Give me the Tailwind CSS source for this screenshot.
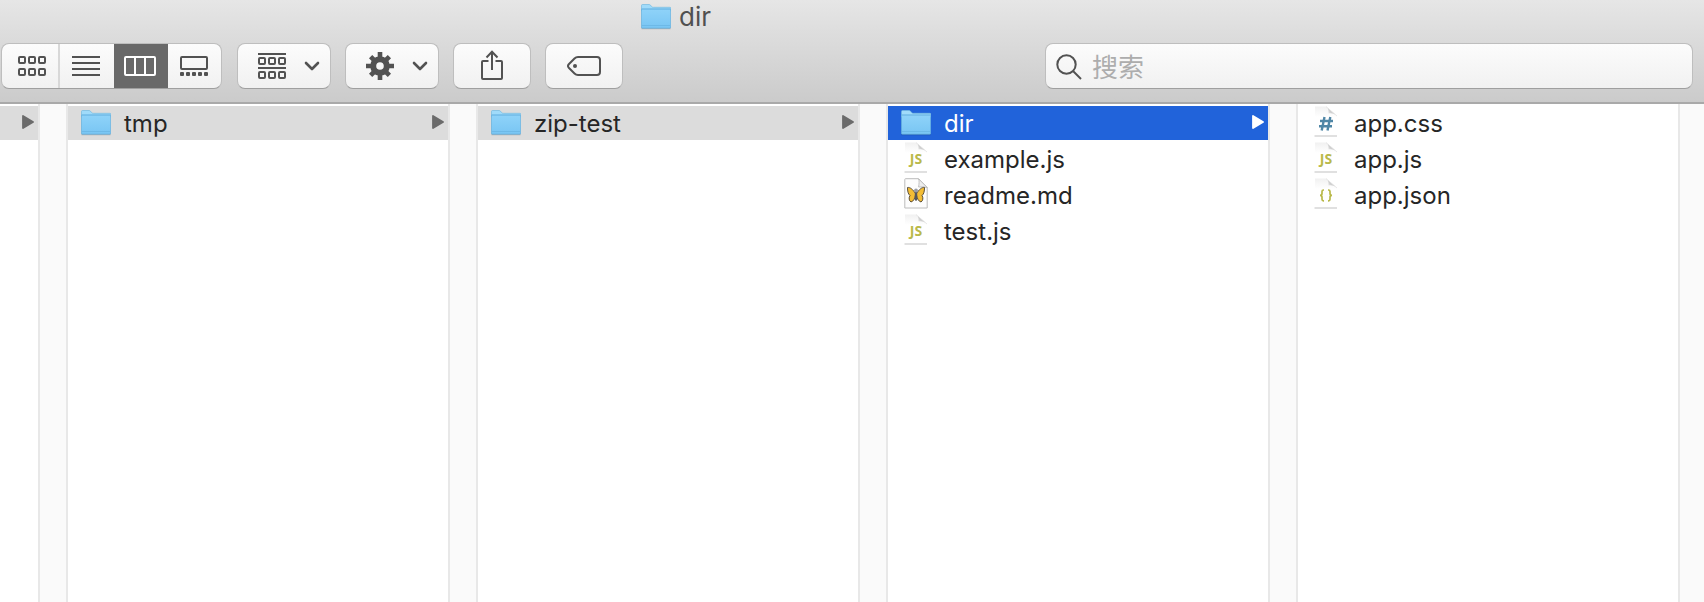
<!DOCTYPE html>
<html lang="zh-CN">
<head>
<meta charset="utf-8">
<meta name="viewport" content="width=device-width, initial-scale=1">
<title>dir</title>
<script src="https://cdn.jsdelivr.net/npm/@tailwindcss/browser@4"></script>
</head>
<body class="flex min-h-screen flex-col bg-white font-[Inter,'Noto_Sans_CJK_SC',sans-serif] text-2xl text-[#262626]">
<svg class="absolute h-0 w-0" aria-hidden="true">
  <defs>
    <linearGradient id="folderFill" x1="0" y1="0" x2="0" y2="1"><stop offset="0" stop-color="#8fd3f9"/><stop offset="1" stop-color="#78c5f3"/></linearGradient>
    <linearGradient id="fold" x1="0" y1="1" x2="1" y2="0"><stop offset="0.1" stop-color="#f2f2f2"/><stop offset="0.5" stop-color="#c8c8c8"/><stop offset="0.6" stop-color="#f4f4f4"/></linearGradient>
    <linearGradient id="paper" x1="0" y1="0" x2="0" y2="1"><stop offset="0" stop-color="#f1f1f1"/><stop offset="0.35" stop-color="#fff"/></linearGradient>
  </defs>
  <symbol id="folder" viewBox="0 0 30 26">
    <path d="M.5 24.5h29" stroke="#000" stroke-opacity=".2" stroke-width="1.5"/>
    <path d="M.5 1.5Q.5.5 1.500.5H8q1 0 1.600.8l1 1.200q.6.8 1.500.8H29q.8 0 .8.800V7H.5z" fill="#a0dbfa" stroke="#74b9e0" stroke-width=".7"/>
    <path d="M.4 5h29.300v18.400q0 .8-.8.800H1.200q-.8 0-.8-.8z" fill="url(#folderFill)" stroke="#62aedb" stroke-width=".7"/>
    <path d="M1 5h28" stroke="#73bce8" stroke-width="1"/>
    <path d="M1 21.500h28" stroke="#69b5e3" stroke-width=".8"/>
  </symbol>
  <symbol id="page" viewBox="0 0 24 31">
    <path d="M1 .5H12L23 10V30H1z" fill="url(#paper)"/>
    <path d="M12 .5C15 2 14.500 6 14.500 7.500C18 7 21 8 23 10z" fill="url(#fold)"/>
    <path d="M12 .5L23 10" stroke="#e2e2e2" stroke-width=".8"/>
    <path d="M.5 30H23" stroke="#cbcbcb" stroke-width="1.200"/>
  </symbol>
  <symbol id="arrow" viewBox="0 0 12 14"><path d="M1 1L11 7L1 13z" fill="currentColor" stroke="currentColor" stroke-width="1.800" stroke-linejoin="round"/></symbol>
  <symbol id="chevron" viewBox="0 0 16 10"><path d="M2 2L8 8L14 2" fill="none" stroke="currentColor" stroke-width="2.600" stroke-linecap="round" stroke-linejoin="round"/></symbol>
</svg>

<header class="border-b-2 border-[#a9a9a9] bg-linear-to-b from-[#e6e6e6] to-[#cbcbcb] pb-[13px] text-[#525252]">
  <div class="flex h-8 items-center pl-[641px] pt-0.5">
    <svg class="h-[26px] w-[30px]" aria-hidden="true"><use href="#folder"/></svg>
    <h1 class="ml-2 text-[26px] leading-8 text-[#505050]">dir</h1>
  </div>
  <div class="mt-[11px] flex h-[46px] items-stretch pl-px pr-[11px]">
    <div class="flex overflow-hidden rounded-lg border border-[#bebebe] border-b-[#9f9f9f] bg-linear-to-b from-[#fcfcfc] to-[#f1f1f1]" role="group" aria-label="显示方式">
      <button type="button" aria-label="图标" class="flex w-[58px] items-center justify-center border-r-2 border-[#d8d8d8] pl-1">
        <svg class="h-5 w-7" viewBox="0 0 28 20" fill="none" stroke="currentColor" stroke-width="2"><rect x="1" y="1" width="6" height="6" rx="1"/><rect x="11" y="1" width="6" height="6" rx="1"/><rect x="21" y="1" width="6" height="6" rx="1"/><rect x="1" y="13" width="6" height="6" rx="1"/><rect x="11" y="13" width="6" height="6" rx="1"/><rect x="21" y="13" width="6" height="6" rx="1"/></svg>
      </button>
      <button type="button" aria-label="列表" class="flex w-[54px] items-center justify-center pr-0.5">
        <svg class="h-5 w-7" viewBox="0 0 28 20" stroke="currentColor" stroke-width="2"><path d="M0 1H28M0 7H28M0 13H28M0 19H28"/></svg>
      </button>
      <button type="button" aria-label="分栏" aria-pressed="true" class="-my-px flex w-[54px] items-center justify-center bg-[#696969] pr-0.5 text-white">
        <svg class="h-5 w-8" viewBox="0 0 32 20" fill="none" stroke="currentColor" stroke-width="2"><rect x="1" y="1" width="30" height="18" rx="1"/><path d="M11 1V19M21 1V19"/></svg>
      </button>
      <button type="button" aria-label="画廊" class="flex w-[53px] items-center justify-center pr-px">
        <svg class="h-5 w-7" viewBox="0 0 28 20" fill="none" stroke="currentColor" stroke-width="2"><rect x="1" y="1" width="26" height="12" rx="1"/><g fill="currentColor" stroke="none"><rect y="16" width="4" height="4" rx="1"/><rect x="6" y="16" width="4" height="4" rx="1"/><rect x="12" y="16" width="4" height="4" rx="1"/><rect x="18" y="16" width="4" height="4" rx="1"/><rect x="24" y="16" width="4" height="4" rx="1"/></g></svg>
      </button>
    </div>
    <button type="button" aria-label="分组" class="ml-[15px] flex w-[94px] items-center justify-between rounded-lg border border-[#bebebe] border-b-[#9f9f9f] bg-linear-to-b from-[#fcfcfc] to-[#f1f1f1] pl-5 pr-2.5">
      <svg class="h-[26px] w-7" viewBox="0 0 28 26" fill="none" stroke="currentColor" stroke-width="2"><path d="M0 1H28M0 15H28"/><rect x="1" y="5" width="6" height="6" rx="1"/><rect x="11" y="5" width="6" height="6" rx="1"/><rect x="21" y="5" width="6" height="6" rx="1"/><rect x="1" y="19" width="6" height="6" rx="1"/><rect x="11" y="19" width="6" height="6" rx="1"/><rect x="21" y="19" width="6" height="6" rx="1"/></svg>
      <svg class="h-2.5 w-4"><use href="#chevron"/></svg>
    </button>
    <button type="button" aria-label="操作" class="ml-3.5 flex w-[94px] items-center justify-between rounded-lg border border-[#bebebe] border-b-[#9f9f9f] bg-linear-to-b from-[#fcfcfc] to-[#f1f1f1] pl-5 pr-2.5">
      <svg class="h-7 w-7" viewBox="-14 -14 28 28"><circle r="6.800" fill="none" stroke="currentColor" stroke-width="6"/><g stroke="currentColor" stroke-width="4.600"><path d="M0 -14V-8M0 14V8M-14 0H-8M14 0H8"/><path d="M-9.400 -9.400L-6 -6M9.400 9.400L6 6M-9.400 9.400L-6 6M9.400 -9.400L6 -6"/></g></svg>
      <svg class="h-2.5 w-4"><use href="#chevron"/></svg>
    </button>
    <button type="button" aria-label="共享" class="ml-3.5 flex w-[78px] items-center justify-center rounded-lg border border-[#bebebe] border-b-[#9f9f9f] bg-linear-to-b from-[#fcfcfc] to-[#f1f1f1]">
      <svg class="mb-0.5 h-[30px] w-[22px]" viewBox="0 0 22 30" fill="none" stroke="currentColor" stroke-width="2"><path d="M7.500 11H2Q1 11 1 12V28Q1 29 2 29H20Q21 29 21 28V12Q21 11 20 11H14.500M11 20V2M5.500 7.500L11 1.800L16.500 7.500"/></svg>
    </button>
    <button type="button" aria-label="标签" class="ml-3.5 flex w-[78px] items-center justify-center rounded-lg border border-[#bebebe] border-b-[#9f9f9f] bg-linear-to-b from-[#fcfcfc] to-[#f1f1f1]">
      <svg class="h-5 w-[34px]" viewBox="0 0 34 20" fill="none" stroke="currentColor" stroke-width="2"><path d="M11 1H30Q33 1 33 4V16Q33 19 30 19H11Q9 19 7.500 17.500L2 12Q0 10 2 8L7.500 2.500Q9 1 11 1Z"/><circle cx="8" cy="10" r="2" fill="currentColor" stroke="none"/></svg>
    </button>
    <label class="ml-auto flex w-[38.3%] items-center rounded-lg border border-[#bebebe] border-b-[#9f9f9f] bg-linear-to-b from-[#fcfcfc] to-[#f1f1f1] pl-2.5">
      <svg class="mt-0.5 h-[26px] w-[26px] shrink-0" viewBox="0 0 26 26" fill="none" stroke="currentColor" stroke-width="2" aria-hidden="true"><circle cx="10.500" cy="10.500" r="9.200"/><path d="M17 17L25 25"/></svg>
      <input type="search" placeholder="搜索" aria-label="搜索" class="ml-2.5 h-full min-w-0 flex-1 bg-transparent pt-0.5 text-[26px] outline-none placeholder:text-[#adadad]">
    </label>
  </div>
</header>

<main class="flex flex-1 leading-8">
  <section class="w-[38px] shrink-0 pt-0.5" aria-label="上级">
    <button type="button" aria-label="展开" class="flex h-[34px] w-full items-center justify-end bg-[#dcdcdc] pr-1 text-[#6b6b6b]"><svg class="mb-0.5 h-3.5 w-3"><use href="#arrow"/></svg></button>
  </section>
  <div class="w-[30px] shrink-0 border-x-2 border-[#e8e8e8] bg-[#fafafa]"></div>

  <section class="min-w-0 flex-1 pt-0.5">
    <button type="button" class="flex h-[34px] w-full items-center bg-[#dcdcdc] pl-[13px] pr-1">
      <svg class="h-[26px] w-[30px]" aria-hidden="true"><use href="#folder"/></svg>
      <span class="ml-[13px] pt-0.5">tmp</span>
      <svg class="mb-0.5 ml-auto h-3.5 w-3 text-[#6b6b6b]" aria-hidden="true"><use href="#arrow"/></svg>
    </button>
  </section>
  <div class="w-[30px] shrink-0 border-x-2 border-[#e8e8e8] bg-[#fafafa]"></div>

  <section class="min-w-0 flex-1 pt-0.5">
    <button type="button" class="flex h-[34px] w-full items-center bg-[#dcdcdc] pl-[13px] pr-1">
      <svg class="h-[26px] w-[30px]" aria-hidden="true"><use href="#folder"/></svg>
      <span class="ml-[13px] pt-0.5">zip-test</span>
      <svg class="mb-0.5 ml-auto h-3.5 w-3 text-[#6b6b6b]" aria-hidden="true"><use href="#arrow"/></svg>
    </button>
  </section>
  <div class="w-[30px] shrink-0 border-x-2 border-[#e8e8e8] bg-[#fafafa]"></div>

  <section class="min-w-0 flex-1 pt-0.5">
    <ul class="flex flex-col gap-0.5">
      <li><button type="button" aria-current="true" class="flex h-[34px] w-full items-center bg-[#2163da] pl-[13px] pr-1 text-white">
        <svg class="h-[26px] w-[30px]" aria-hidden="true"><use href="#folder"/></svg>
        <span class="ml-[13px] pt-0.5">dir</span>
        <svg class="mb-0.5 ml-auto h-3.5 w-3" aria-hidden="true"><use href="#arrow"/></svg>
      </button></li>
      <li><button type="button" class="flex h-[34px] w-full items-center pl-4">
        <svg class="mb-[3px] h-[31px] w-6" viewBox="0 0 24 31" aria-hidden="true"><use href="#page"/><text x="12" y="22" text-anchor="middle" font-family="Open Sans" font-weight="700" font-size="14" fill="#b9b94a">JS</text></svg>
        <span class="ml-4 pt-0.5">example.js</span>
      </button></li>
      <li><button type="button" class="flex h-[34px] w-full items-center pl-4">
        <svg class="mb-[3px] h-[31px] w-6" viewBox="0 0 24 31" aria-hidden="true">
          <path d="M1.500 .7H14.500L23.200 9.500V30H.8V1.500Q.8.7 1.500.7z" fill="#fdfdfd" stroke="#bcbcbc"/>
          <path d="M14.500 .8C15.500 3 15 6 14.600 9Q19 8.500 23.200 9.500z" fill="#ededed" stroke="#b5b5b5" stroke-width=".8"/>
          <path d="M11.500 15.500C9 11.500 6 9 3.500 9.500C3.500 13 4 16 6 17.500C4.500 19.500 5 23 7 24C9.500 23.500 11 20 11.500 17zM12.500 15.500C15 11.500 18 9 20.500 9.500C20.500 13 20 16 18 17.500C19.500 19.500 19 23 17 24C14.500 23.500 13 20 12.500 17z" fill="#f3bd35" stroke="#4a4030" stroke-width=".9"/>
          <path d="M12 14V21.500" stroke="#55565c" stroke-width="2.400" stroke-linecap="round"/><circle cx="12" cy="12.500" r="1.900" fill="#9a9da4"/>
        </svg>
        <span class="ml-4 pt-0.5">readme.md</span>
      </button></li>
      <li><button type="button" class="flex h-[34px] w-full items-center pl-4">
        <svg class="mb-[3px] h-[31px] w-6" viewBox="0 0 24 31" aria-hidden="true"><use href="#page"/><text x="12" y="22" text-anchor="middle" font-family="Open Sans" font-weight="700" font-size="14" fill="#b9b94a">JS</text></svg>
        <span class="ml-4 pt-0.5">test.js</span>
      </button></li>
    </ul>
  </section>
  <div class="w-[30px] shrink-0 border-x-2 border-[#e8e8e8] bg-[#fafafa]"></div>

  <section class="min-w-0 flex-1 pt-0.5">
    <ul class="flex flex-col gap-0.5">
      <li><button type="button" class="flex h-[34px] w-full items-center pl-4">
        <svg class="mb-[3px] h-[31px] w-6" viewBox="0 0 24 31" aria-hidden="true"><use href="#page"/><path d="M10.500 11L7.700 24.500M16.300 11L13.500 24.500M6 15H19M5 20.300H18" stroke="#4f86a6" stroke-width="2.400"/></svg>
        <span class="ml-4 pt-0.5">app.css</span>
      </button></li>
      <li><button type="button" class="flex h-[34px] w-full items-center pl-4">
        <svg class="mb-[3px] h-[31px] w-6" viewBox="0 0 24 31" aria-hidden="true"><use href="#page"/><text x="12" y="22" text-anchor="middle" font-family="Open Sans" font-weight="700" font-size="14" fill="#b9b94a">JS</text></svg>
        <span class="ml-4 pt-0.5">app.js</span>
      </button></li>
      <li><button type="button" class="flex h-[34px] w-full items-center pl-4">
        <svg class="mb-[3px] h-[31px] w-6" viewBox="0 0 24 31" aria-hidden="true"><use href="#page"/><path d="M10 12H9.500Q8 12 8 13.500V15.500Q8 17.300 6 17.300Q8 17.300 8 19V21.300Q8 22.800 9.500 22.800H10M14 12H14.500Q16 12 16 13.500V15.500Q16 17.300 18 17.300Q16 17.300 16 19V21.300Q16 22.800 14.500 22.800H14" fill="none" stroke="#b9b94a" stroke-width="1.700"/></svg>
        <span class="ml-4 pt-0.5">app.json</span>
      </button></li>
    </ul>
  </section>
  <div class="w-[26px] shrink-0 border-l-2 border-[#e8e8e8] bg-[#fafafa]"></div>
</main>
</body>
</html>
